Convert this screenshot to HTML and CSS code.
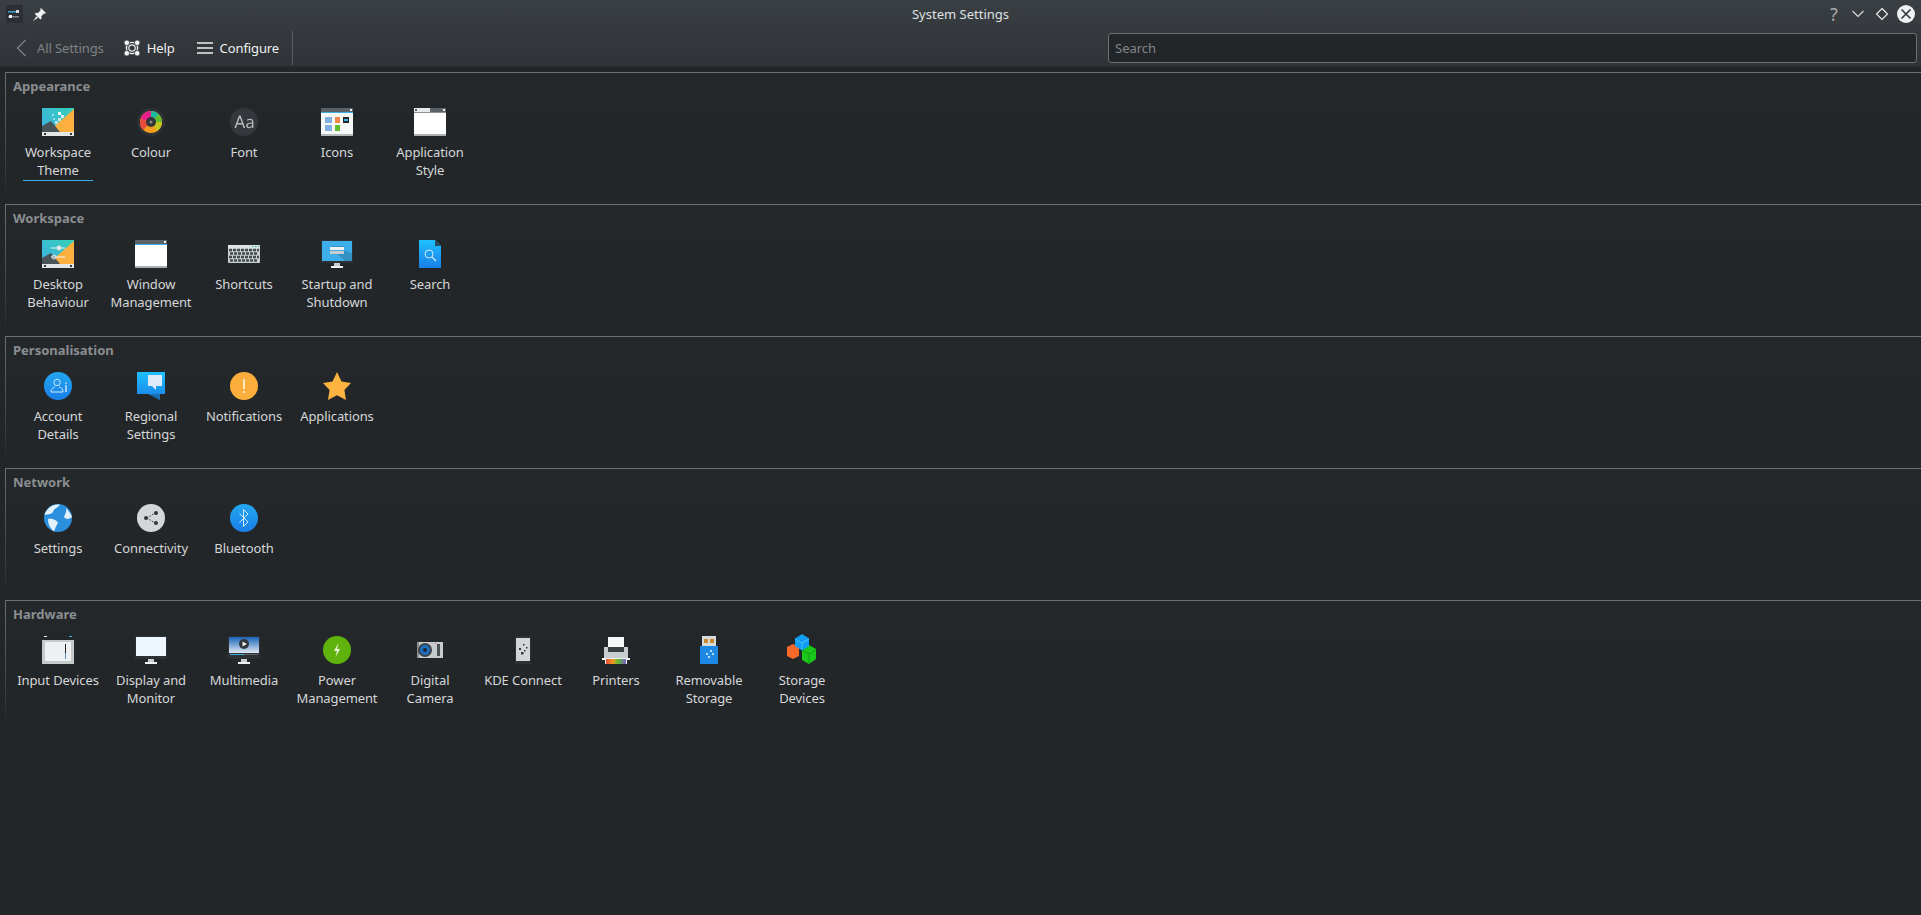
FILE: index.html
```html
<!DOCTYPE html>
<html lang="en">
<head>
  <meta charset="UTF-8">
  <title>System Settings</title>
  <link rel="stylesheet" href="styles.css">
</head>
<body>
  <header class="window-header">
    <div class="titlebar">
      <div class="titlebar-left">
        <svg class="app-icon" width="17" height="18" viewBox="0 0 17 18"><rect width="17" height="18" fill="#2b2f33"/><rect x="2" y="6" width="11" height="1.500" fill="#3d9bc9"/><rect x="2" y="11" width="11" height="1.500" fill="#7e878c"/><rect x="10" y="5" width="3" height="3" fill="#cfd8dc"/><rect x="3" y="10" width="3" height="3" fill="#eef1f2"/></svg>
        <svg class="pin-icon" width="13" height="13" viewBox="0 0 14 14"><path d="M8.500 0 14 5.500 12.800 6.300 11.800 6 9 9 9.200 11.400 8 12.400 2 6.400 3 5.200 5.400 5.400 8.200 2.400 7.800 1.200Z" fill="#eff0f1"/><path d="M0 14 3.800 8.800 5.400 10.400Z" fill="#eff0f1"/></svg>
      </div>
      <div class="window-title">System Settings</div>
      <div class="window-buttons">
        <span class="help-mark">?</span>
        <svg width="14" height="14" viewBox="0 0 14 14"><path d="M1.500 4 7 9.500 12.500 4" fill="none" stroke="#dfe1e2" stroke-width="1.100"/></svg>
        <svg width="14" height="14" viewBox="0 0 14 14"><path d="M7 1.500 12.500 7 7 12.500 1.500 7Z" fill="none" stroke="#eff0f1" stroke-width="1.100"/></svg>
        <span class="close-btn"><svg width="18" height="18" viewBox="0 0 18 18"><path d="M4.500 4.500 13.500 13.500M13.500 4.500 4.500 13.500" stroke="#31363b" stroke-width="1.600"/></svg></span>
      </div>
    </div>
    <div class="toolbar">
      <div class="tool-btn tool-disabled">
        <svg width="22" height="22" viewBox="0 0 22 22"><path d="M15.500 3 7.500 11 15.500 19" fill="none" stroke="#7e8386" stroke-width="1.200"/></svg>
        <span>All Settings</span>
      </div>
      <div class="tool-btn tool-help">
        <svg width="16" height="16" viewBox="0 0 16 16"><circle cx="8" cy="8" r="5.600" fill="none" stroke="#eff0f1" stroke-width="1.400"/><circle cx="8" cy="8" r="3.200" fill="none" stroke="#eff0f1" stroke-width="1.200"/><g fill="#eff0f1" stroke="#34393d" stroke-width=".8"><circle cx="2.800" cy="2.800" r="2.800"/><circle cx="13.200" cy="2.800" r="2.800"/><circle cx="2.800" cy="13.200" r="2.800"/><circle cx="13.200" cy="13.200" r="2.800"/></g></svg>
        <span>Help</span>
      </div>
      <div class="tool-btn">
        <svg width="16" height="12" viewBox="0 0 16 12"><path d="M0 1H16M0 6H16M0 11H16" stroke="#eff0f1" stroke-width="1.600"/></svg>
        <span>Configure</span>
      </div>
      <div class="tool-sep"></div>
      <div class="search-box">Search</div>
    </div>
  </header>

  <main class="content">
    <section class="group">
      <h2>Appearance</h2>
      <div class="items">
        <div class="item">
          <svg class="icon" viewBox="0 0 32 32"><defs><linearGradient id="wall" x1="0" y1="1" x2="1" y2="0"><stop offset="0" stop-color="#3daee9"/><stop offset="1" stop-color="#35d0b5"/></linearGradient></defs><rect y="2" width="32" height="28" fill="url(#wall)"/><path d="M32 3V26H6Z" fill="#fdb03f"/><path d="M0 26V20L9 15 18 26Z" fill="#4a5458"/><g fill="#eef3f5"><rect x="16" y="6" width="3" height="3"/><rect x="19" y="9" width="3" height="3" opacity=".9"/><rect x="16" y="12" width="3" height="3" opacity=".8"/><rect x="13" y="15" width="3" height="3" opacity=".7"/><rect x="10" y="8" width="2" height="2" opacity=".6"/><rect x="11" y="12" width="2" height="2" opacity=".5"/></g><rect y="26" width="32" height="4" fill="#e4e6e6"/><rect x="28" y="27" width="2" height="2" fill="#31363b"/><rect x="2" y="27" width="2" height="2" fill="#31363b"/></svg>
          <span class="label focused">Workspace Theme</span>
        </div>
        <div class="item">
          <svg class="icon" viewBox="0 0 32 32"><circle cx="16" cy="16" r="14" fill="#2d3135"/><circle cx="16" cy="16" r="11" fill="#f39c1f"/><path d="M16 16V5A11 11 0 0 1 24 8.500Z" fill="#1abc9c"/><path d="M16 16 24 8.500A11 11 0 0 1 27 16Z" fill="#62bd2e"/><path d="M16 16V5A11 11 0 0 0 5.500 13Z" fill="#e91e8c"/><path d="M16 16 5.500 13A11 11 0 0 0 8 24Z" fill="#e74c3c"/><path d="M16 16H27A11 11 0 0 1 22 25Z" fill="#c4c81e"/><circle cx="16" cy="16" r="5" fill="#31363b"/><circle cx="16" cy="16" r="1.500" fill="#8a8f92"/></svg>
          <span class="label">Colour</span>
        </div>
        <div class="item">
          <svg class="icon" viewBox="0 0 32 32"><circle cx="16" cy="16" r="14" fill="#34383c"/><path d="M6.400 22 11 9.500H12.600L17.200 22H15.600L14.300 18.400H9.300L8 22ZM9.800 17H13.800L11.800 11.400Z" fill="#b8bbbd"/><path d="M19 13.600C20 13 21 12.800 22 12.800 24.400 12.800 25.400 13.900 25.400 16V22H24.200L24 20.800C23.200 21.600 22.200 22.200 21 22.200 19.200 22.200 18.200 21 18.200 19.500 18.200 17.400 20 16.500 24 16.400V16C24 14.600 23.400 14 22 14 21 14 20.200 14.200 19.400 14.800ZM24 17.500C21 17.600 19.700 18.200 19.700 19.500 19.700 20.500 20.300 21 21.300 21 22.400 21 23.300 20.400 24 19.600Z" fill="#b8bbbd"/></svg>
          <span class="label">Font</span>
        </div>
        <div class="item">
          <svg class="icon" viewBox="0 0 32 32"><rect y="2" width="32" height="28" fill="#f6f7f7"/><rect y="2" width="32" height="4" fill="#5c6368"/><rect y="6" width="32" height="1" fill="#3daee9"/><rect x="29" y="3" width="2" height="2" fill="#eff0f1"/><rect y="28" width="32" height="2" fill="#b4b9bc"/><rect x="4" y="11" width="7" height="6" fill="#7fb2e0"/><rect x="14" y="11" width="5" height="6" fill="#f5894a"/><rect x="22" y="11" width="6" height="6" fill="#232629"/><rect x="23" y="13" width="4" height="2" fill="#3daee9"/><rect x="4" y="19" width="7" height="6" fill="#7fb2e0"/><rect x="14" y="19" width="5" height="6" fill="#62bd2e"/></svg>
          <span class="label">Icons</span>
        </div>
        <div class="item">
          <svg class="icon" viewBox="0 0 32 32"><rect y="2" width="32" height="28" fill="#fff"/><rect y="2" width="32" height="4" fill="#e6eaec"/><rect x="16" y="2" width="16" height="4" fill="#5c6368"/><rect x="1" y="3" width="2" height="2" fill="#5c6368"/><rect x="29" y="3" width="2" height="2" fill="#eff0f1"/><rect y="6" width="32" height="1" fill="#8a9095"/><rect y="28" width="32" height="2" fill="#a9afb3"/></svg>
          <span class="label">Application Style</span>
        </div>
      </div>
    </section>

    <section class="group">
      <h2>Workspace</h2>
      <div class="items">
        <div class="item">
          <svg class="icon" viewBox="0 0 32 32"><rect y="2" width="32" height="28" fill="url(#wall)"/><path d="M32 3V26H6Z" fill="#fdb03f"/><path d="M0 26V20L9 15 18 26Z" fill="#4a5458"/><path d="M9 10H23M9 19H23" stroke="#eef3f5" stroke-width="1"/><circle cx="17" cy="10" r="2.400" fill="#dfe6e8"/><circle cx="12" cy="19" r="2" fill="none" stroke="#dfe6e8"/><rect y="26" width="32" height="4" fill="#e4e6e6"/><rect x="28" y="27" width="2" height="2" fill="#31363b"/><rect x="2" y="27" width="2" height="2" fill="#31363b"/></svg>
          <span class="label">Desktop Behaviour</span>
        </div>
        <div class="item">
          <svg class="icon" viewBox="0 0 32 32"><rect y="2" width="32" height="28" fill="#fff"/><rect y="2" width="32" height="4" fill="#5c6368"/><rect y="6" width="32" height="1" fill="#3daee9"/><rect x="29" y="3" width="2" height="2" fill="#eff0f1"/><rect y="28" width="32" height="2" fill="#a9afb3"/></svg>
          <span class="label">Window Management</span>
        </div>
        <div class="item">
          <svg class="icon" viewBox="0 0 32 32"><rect y="7" width="32" height="18" rx="1" fill="#c9cfcf"/><rect y="7" width="32" height="4" fill="#dfe3e3"/><rect x="24" y="8" width="1.500" height="1" fill="#1abc9c"/><rect x="27" y="8" width="1.500" height="1" fill="#1abc9c"/><rect x="30" y="8" width="1" height="1" fill="#1abc9c"/><path d="M1 12H31M2 15.500H30M1 19H31M2 22.500H30" stroke="#454b50" stroke-width="2.400" stroke-dasharray="3 1"/></svg>
          <span class="label">Shortcuts</span>
        </div>
        <div class="item">
          <svg class="icon" viewBox="0 0 32 32"><rect y="2" width="32" height="23" fill="#2d3135"/><rect x="1" y="3" width="30" height="20" fill="#3daee9"/><path d="M9 8H23V16H16L24 23H31V15Z" fill="#2e7ea8" opacity=".6"/><rect x="9" y="9" width="14" height="3" fill="#eef1f2"/><rect x="9" y="13" width="14" height="3" fill="#c7ccd0"/><rect x="13" y="25" width="6" height="3" fill="#c8cdd0"/><rect x="10" y="28" width="12" height="2" fill="#eff0f1"/></svg>
          <span class="label">Startup and Shutdown</span>
        </div>
        <div class="item">
          <svg class="icon" viewBox="0 0 32 32"><defs><linearGradient id="blue1" x1="0" y1="0" x2="0" y2="1"><stop offset="0" stop-color="#1ec0ff"/><stop offset="1" stop-color="#1a7fe8"/></linearGradient></defs><path d="M5 2H21L27 8V30H5Z" fill="url(#blue1)"/><path d="M21 2 27 8H21Z" fill="#2c4a5e"/><circle cx="15" cy="16" r="4" fill="none" stroke="#cfe9fb" stroke-width="1"/><path d="M18 19 22 23" stroke="#cfe9fb" stroke-width="1.200"/></svg>
          <span class="label">Search</span>
        </div>
      </div>
    </section>

    <section class="group">
      <h2>Personalisation</h2>
      <div class="items">
        <div class="item">
          <svg class="icon" viewBox="0 0 32 32"><defs><linearGradient id="blue2" x1="0" y1="0" x2="0" y2="1"><stop offset="0" stop-color="#22a7f0"/><stop offset="1" stop-color="#1a7fe8"/></linearGradient></defs><circle cx="16" cy="16" r="14" fill="url(#blue2)"/><circle cx="15" cy="12.500" r="3.200" fill="none" stroke="#cfe9fb"/><path d="M9 22C9 18 12 17.500 13 17M21 22H9M17 17C19 17.500 21 18.500 21 22" fill="none" stroke="#cfe9fb"/><path d="M24 15V22M24 12.500V14" stroke="#cfe9fb" stroke-width="1.400"/></svg>
          <span class="label">Account Details</span>
        </div>
        <div class="item">
          <svg class="icon" viewBox="0 0 32 32"><path d="M2 2H30V24H25V30L18 24H2Z" fill="url(#blue1)"/><path d="M13 24 25 30V24H20Z" fill="#1d6fb3"/><path d="M13 5H27V16H21V20L17 16H13Z" fill="#dcebf7"/></svg>
          <span class="label">Regional Settings</span>
        </div>
        <div class="item">
          <svg class="icon" viewBox="0 0 32 32"><circle cx="16" cy="16" r="14" fill="#fbae3c"/><rect x="15" y="9" width="2" height="10" fill="#fde6c0"/><rect x="15" y="21" width="2" height="2" fill="#fde6c0"/></svg>
          <span class="label">Notifications</span>
        </div>
        <div class="item">
          <svg class="icon" viewBox="0 0 32 32"><path d="M16 2 20.500 11.500 30 13 23.400 20 25 30 16 25.200 7 30 8.600 20 2 13 11.500 11.500Z" fill="#fcb33f"/></svg>
          <span class="label">Applications</span>
        </div>
      </div>
    </section>

    <section class="group">
      <h2>Network</h2>
      <div class="items">
        <div class="item">
          <svg class="icon" viewBox="0 0 32 32"><circle cx="16" cy="16" r="14" fill="#2a8fdc"/><path d="M6 7C9 3 14 2 18 2.500 16 6 12 6 11 10 9 13 5 12 2.500 13 3 11 4 9 6 7ZM6 17C10 16 15 18 16 21 14 24 13 27 12 29.500 9 27 6 23 6 17ZM24 6C26 8 29 12 30 15 28 17 24 18 22 15 23 12 25 10 24 6Z" fill="#e3f1fb"/></svg>
          <span class="label">Settings</span>
        </div>
        <div class="item">
          <svg class="icon" viewBox="0 0 32 32"><circle cx="16" cy="16" r="14" fill="#d4d7d8"/><path d="M12 16 20 11M12 16 20 21" stroke="#31363b" stroke-dasharray="1.500 1.500"/><circle cx="11" cy="16" r="2" fill="#31363b"/><circle cx="21" cy="11" r="2" fill="#31363b"/><circle cx="21" cy="21" r="2" fill="#31363b"/></svg>
          <span class="label">Connectivity</span>
        </div>
        <div class="item">
          <svg class="icon" viewBox="0 0 32 32"><circle cx="16" cy="16" r="14" fill="url(#blue2)"/><path d="M11.500 11.500 20 20 15.500 24.500V7.500L20 12 11.500 20.500" fill="none" stroke="#cfe9fb"/></svg>
          <span class="label">Bluetooth</span>
        </div>
      </div>
    </section>

    <section class="group">
      <h2>Hardware</h2>
      <div class="items">
        <div class="item">
          <svg class="icon" viewBox="0 0 32 32"><rect y="6" width="32" height="24" fill="#c4c9cb"/><rect x="3" y="8" width="26" height="19" fill="#eff0f1"/><rect x="2" y="2" width="3" height="1" fill="#eff0f1"/><rect x="27" y="2" width="3" height="1" fill="#3daee9"/><rect y="4" width="32" height="2" fill="#232629"/><rect x="23" y="10" width="1" height="9" fill="#232629"/><rect x="23" y="19" width="1" height="6" fill="#5c8fb5"/></svg>
          <span class="label">Input Devices</span>
        </div>
        <div class="item">
          <svg class="icon" viewBox="0 0 32 32"><rect y="2" width="32" height="23" fill="#2d3135"/><rect x="1" y="3" width="30" height="19" fill="#eef7fd"/><rect x="13" y="25" width="6" height="3" fill="#c8cdd0"/><rect x="10" y="28" width="12" height="2" fill="#eff0f1"/></svg>
          <span class="label">Display and Monitor</span>
        </div>
        <div class="item">
          <svg class="icon" viewBox="0 0 32 32"><defs><linearGradient id="sky" x1="0" y1="0" x2="0" y2="1"><stop offset="0" stop-color="#1a62b8"/><stop offset="1" stop-color="#dfe9f2"/></linearGradient></defs><rect y="2" width="32" height="23" fill="#2d3135"/><rect x="1" y="3" width="30" height="16" fill="url(#sky)"/><rect x="2" y="20" width="14" height="1" fill="#3daee9"/><rect x="16" y="20" width="14" height="1" fill="#5c6368"/><circle cx="16" cy="10" r="5" fill="#31363b"/><path d="M14.500 7.500 19 10 14.500 12.500Z" fill="#eff0f1"/><rect x="13" y="25" width="6" height="3" fill="#c8cdd0"/><rect x="10" y="28" width="12" height="2" fill="#eff0f1"/></svg>
          <span class="label">Multimedia</span>
        </div>
        <div class="item">
          <svg class="icon" viewBox="0 0 32 32"><circle cx="16" cy="16" r="14" fill="#5fb30c"/><path d="M17.500 9 13 17H16L14.500 23 19 15H16Z" fill="#eef8df"/></svg>
          <span class="label">Power Management</span>
        </div>
        <div class="item">
          <svg class="icon" viewBox="0 0 32 32"><rect x="3" y="8" width="26" height="16" fill="#c6cbce"/><rect x="3" y="8" width="2" height="16" fill="#8b9296"/><rect x="23" y="10" width="3" height="12" fill="#4a5054"/><circle cx="11" cy="16" r="7" fill="#3e4347"/><circle cx="11" cy="16" r="5" fill="#1b6fc2"/><circle cx="11" cy="16" r="2" fill="#232629"/><rect x="21" y="9" width="1" height="1" fill="#e84a6f"/></svg>
          <span class="label">Digital Camera</span>
        </div>
        <div class="item">
          <svg class="icon" viewBox="0 0 32 32"><rect x="8" y="2" width="16" height="28" fill="#2d3135"/><rect x="9" y="4" width="14" height="23" fill="#d3d6d7"/><g fill="#31363b"><rect x="16" y="10" width="1.500" height="1.500"/><rect x="19" y="13" width="1.500" height="1.500"/><rect x="17" y="16" width="1.500" height="1.500"/><rect x="12" y="14" width="2" height="2"/><rect x="14" y="18" width="2.500" height="2.500"/></g></svg>
          <span class="label">KDE Connect</span>
        </div>
        <div class="item">
          <svg class="icon" viewBox="0 0 32 32"><defs><linearGradient id="rainbow"><stop offset="0" stop-color="#e74c3c"/><stop offset=".35" stop-color="#f39c1f"/><stop offset=".6" stop-color="#62bd2e"/><stop offset="1" stop-color="#7b5fc9"/></linearGradient></defs><rect x="8" y="3" width="16" height="11" fill="#f6f7f7"/><rect x="4" y="13" width="24" height="13" fill="#c8cdd0"/><rect x="2" y="24" width="28" height="2" fill="#eff0f1"/><rect x="8" y="13" width="16" height="5" fill="#3a3f44"/><rect x="5" y="26" width="22" height="4" fill="#eff0f1"/><rect x="6" y="25" width="20" height="5" fill="url(#rainbow)"/></svg>
          <span class="label">Printers</span>
        </div>
        <div class="item">
          <svg class="icon" viewBox="0 0 32 32"><rect x="9" y="2" width="14" height="11" fill="#d8dbdc"/><rect x="11" y="5" width="4" height="4" fill="#c98a2e"/><rect x="17" y="5" width="4" height="4" fill="#c98a2e"/><rect x="7" y="12" width="18" height="18" fill="#1e88e5"/><g fill="#b9defa"><rect x="17" y="16" width="2" height="2"/><rect x="19" y="19" width="2" height="2"/><rect x="15" y="22" width="2" height="2"/><rect x="13" y="19" width="2" height="2"/></g></svg>
          <span class="label">Removable Storage</span>
        </div>
        <div class="item">
          <svg class="icon" viewBox="0 0 32 32"><path d="M7 10 13 13V22L7 25 1 22V13Z" fill="#f4692a"/><path d="M23 11 30 15V25L23 30 16 26V15Z" fill="#1bc71b"/><path d="M16 0 23 4.500V12L16 16.500 9 12V4.500Z" fill="#0f9df5"/><path d="M9 5 16 9 23 5 16 9V16" fill="none" stroke="#43bdfb"/><path d="M16 16 23 20 30 16M23 20V30" fill="none" stroke="#0d9f0d"/></svg>
          <span class="label">Storage Devices</span>
        </div>
      </div>
    </section>
  </main>
</body>
</html>
```

FILE: styles.css
```css
* {
  box-sizing: border-box;
}

html, body {
  height: 100%;
}

body {
  margin: 0;
  background-color: #232629;
  color: #eff0f1;
  font-family: "Noto Sans", sans-serif;
  font-size: 13px;
  line-height: 18px;
  overflow: hidden;
}

.window-header {
  height: 67px;
  background: linear-gradient(#3a3f44, #2f3337);
  border-bottom: 1px solid #2a2d31;
}

.titlebar {
  height: 28px;
  display: grid;
  grid-template-columns: 1fr auto 1fr;
  align-items: center;
}

.titlebar-left {
  display: flex;
  align-items: center;
  gap: 10px;
  padding-left: 6px;
}

.window-title {
  color: #dfe1e2;
}

.window-buttons {
  display: flex;
  align-items: center;
  justify-content: flex-end;
  gap: 10px;
  padding-right: 6px;
}

.help-mark {
  width: 14px;
  text-align: center;
  color: #a8acae;
  font-size: 18px;
  line-height: 18px;
}

.close-btn {
  width: 18px;
  height: 18px;
  margin-left: -2px;
  border-radius: 50%;
  background-color: #eff0f1;
  display: flex;
}

.toolbar {
  height: 40px;
  display: flex;
  align-items: center;
  padding-left: 10px;
  padding-right: 4px;
  letter-spacing: -0.1px;
}

.tool-btn {
  display: flex;
  align-items: center;
  gap: 7px;
  margin-right: 21px;
}

.tool-disabled {
  color: #7e8386;
  gap: 5px;
  margin-right: 20px;
}

.tool-help {
  margin-right: 22px;
}

.tool-sep {
  width: 1px;
  height: 34px;
  background-color: #5a5f63;
  margin-left: -8px;
}

.search-box {
  margin-left: auto;
  width: 809px;
  height: 30px;
  padding: 5px 6px;
  background-color: #232629;
  border: 1px solid #6b7073;
  border-radius: 3px;
  color: #80858a;
  letter-spacing: 0;
}

.content {
  padding: 5px 0 0 5px;
}

.group {
  height: 132px;
  border-top: 1px solid #6b7073;
  border-left: 1px solid;
  border-image: linear-gradient(#6b7073, #3a3e42 70%, #232629 95%) 1;
  background: linear-gradient(#25282b, #232629 60%);
}

.group h2 {
  margin: 0;
  padding: 4px 0 0 7px;
  font-size: 13px;
  line-height: 18px;
  font-weight: 700;
  color: #8a8e91;
}

.items {
  display: flex;
  padding: 11px 0 0 5.5px;
}

.item {
  width: 93px;
  display: flex;
  flex-direction: column;
  align-items: center;
  text-align: center;
  color: #d5d7d8;
  letter-spacing: -0.1px;
}

.icon {
  width: 32px;
  height: 32px;
  display: block;
  margin-bottom: 5px;
}

.label {
  display: block;
  padding: 0 3px 2px;
}

.focused {
  width: 70px;
  padding: 0 0 1px;
  border-bottom: 1px solid #3daee9;
}
```
